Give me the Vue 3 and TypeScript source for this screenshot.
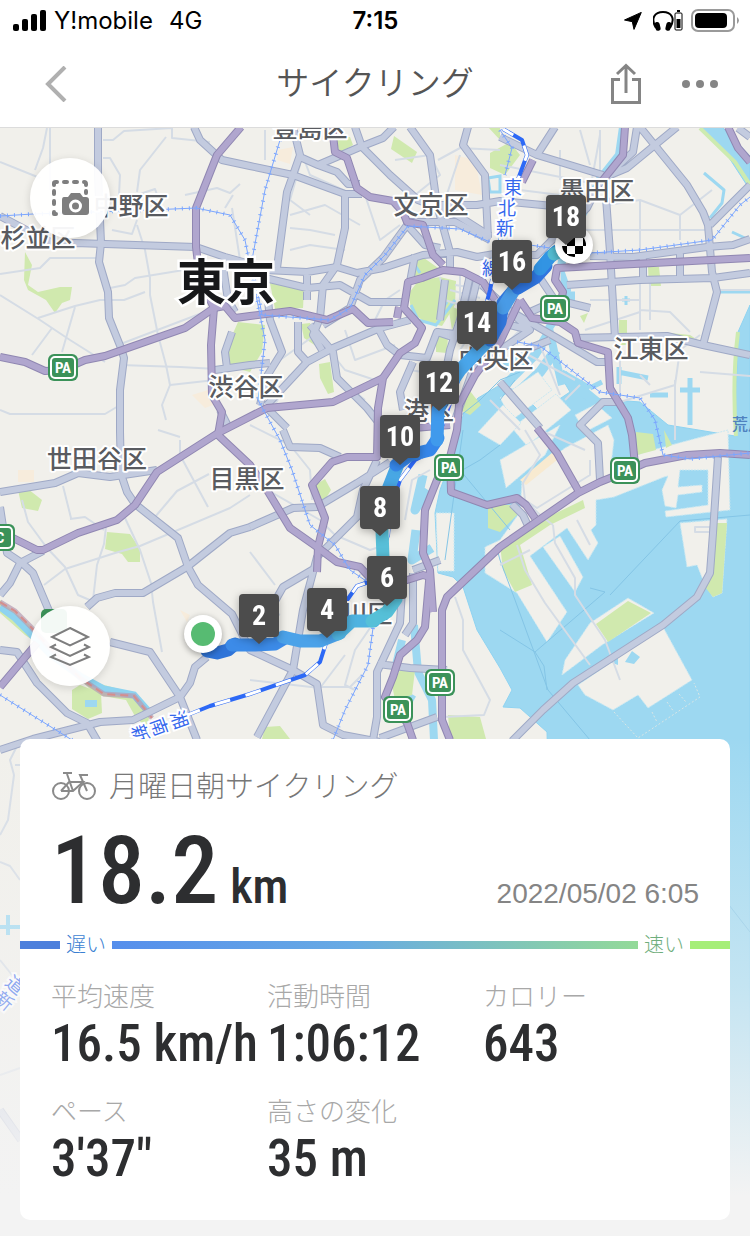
<script setup lang="ts">
interface Pin { km: number; x: number; y: number }
interface Label { text: string; x: number; y: number }
interface Segment { d: string; color: string }

const water: string[] = [
  'M453 455L458 435L464 412L478 398L500 385L520 392L540 412L570 392L560 375L590 398L640 402L668 425L735 436L736 400L738 332L750 305V1236H560L547 732L520 708L503 707L512 690L500 668L477 630L463 587L453 577L438 573L435 513L440 490Z',
  'M700 127L724 150L750 190V156L722 127Z',
]
const canals: { d: string; w: number }[] = [
  { d: 'M623 127L619 155L600 179L587 206L566 244L560 270L567 290L564 305L549 328L556 360L562 385', w: 8 },
  { d: 'M568 296H575M549 332L535 355L500 390L470 425', w: 9 },
  { d: 'M556 350L540 372L510 400M563 375L600 405L590 425M530 352L505 368', w: 10 },
  { d: 'M562 372L590 388M618 372L648 378M619 367V384M590 388L602 382M690 378V425M680 390H700M650 395H668M562 400L535 425', w: 5 },
  { d: 'M704 173L724 190L722 203L710 218M622 300H630M626 296V305M732 232L745 238M720 292H750', w: 3 },
  { d: 'M423 475L415 510L428 490M416 530L412 560L432 548', w: 9 },
  { d: 'M402 640L396 665M414 625L418 672L432 700L434 740M400 692L414 700', w: 8 },
  { d: 'M483 315L476 345M0 927H20M8 915V935', w: 4 },
]
const islands: string[] = [
  'M522 480L565 448L608 425L614 440L611 465L645 452L690 440L728 430L730 510L666 517L665 511L708 505L708 470L680 470L678 487L702 485V492L678 495L676 508L665 506L662 490L668 476L664 477L614 497L596 500L596 525L591 530L598 543L588 560L567 528L530 556L567 612L547 642L517 593L485 573V547L500 540L520 512Z',
  'M543 547L560 536L583 577L575 592Z',
  'M562 675L565 660L590 623L628 598L654 613L602 645Z',
  'M578 685L663 627L692 680L648 708L638 695L613 710L585 695Z',
  'M680 523L727 519L722 593L713 597L703 580L697 565L687 567Z',
  'M436 513H454V571H438Z',
  'M500 398L538 372L552 390L512 420Z',
  'M512 428L556 394L571 410L527 446Z',
  'M478 432L503 405L521 423L500 445Z',
  'M575 415L596 404L612 418L585 432Z',
  'M500 460L560 425L545 455L506 488Z',
]
const parks: string[] = [
  'M25 252L32 265L28 285L38 292L60 287L72 287L70 300L62 303L55 313L46 300L28 290L24 280Z',
  'M409 293L418 281L440 277L456 281L455 305L442 326L425 322L411 312Z',
  'M413 262L424 258L441 270L420 276L413 280Z',
  'M270 283L304 290L303 308L275 309Z',
  'M394 136L417 152L412 163L391 149Z',
  'M335 137H350L353 145L340 153Z',
  'M228 345L238 322L265 325L262 352L250 372L230 367Z',
  'M301 324L310 323L322 350L304 338Z',
  'M319 364L330 362L334 392L328 394L320 378Z',
  'M490 153L510 142L520 155L505 175L490 168ZM488 127H500V140Z',
  'M436 336H448L447 353L436 352ZM448 305L460 310L452 330Z',
  'M648 267H659L661 286H649ZM619 320H627V345H619ZM580 316L588 313L584 323Z',
  'M660 332L690 335L705 345L680 340Z',
  'M18 490L28 489L42 500L38 511L22 508Z',
  'M107 532L130 534L140 549V562H128L122 554L105 549Z',
  'M315 485L325 479L331 490L325 500L318 498Z',
  'M72 690L80 685L101 693L102 713L88 719L72 709Z',
  'M717 523H727L722 593L713 597L705 587Z',
  'M596 624L628 601L651 613L608 642Z',
  'M500 545L530 525L548 517L583 500L585 508L550 525L520 545L532 585L515 592L503 570Z',
  'M636 432L653 434L656 450L637 455ZM664 430L672 445L666 448Z',
  'M488 505L515 505L520 512L500 532L488 528Z',
  'M265 727L280 726L290 739H262ZM448 715L480 717L486 739H450Z',
  'M0 600L30 625L50 650L78 676L104 685L134 693L150 713L147 727L136 718L126 700L96 695L55 655L25 635L0 613Z',
  'M392 685L400 670L415 670L412 695L395 700Z',
  'M463 395L470 391L481 405L470 415L460 410Z',
]
const sand: string[] = [
  'M278 150L293 147L290 164L277 160Z', 'M455 155L475 160L482 195L455 190Z', 'M192 395L208 390L213 405L205 408Z',
  'M513 476L552 446L558 454L520 486Z', 'M18 470H34V482H18Z', 'M448 722L475 718L486 739H460Z', 'M180 610L190 615L187 622Z',
]
const minor: string[] = [
  'M0 162L40 178M47 128L43 148L35 170M103 140H113L124 131L172 128M103 158H110L120 175L119 195M166 137L140 170L137 192M137 220L132 234L112 230M137 195L155 189L160 203M172 128V138L210 142M185 195L217 188L230 193L240 184M137 225L145 250L150 278L150 295L158 335L166 365L170 385L162 405L166 420',
  'M0 274L40 268L50 258L100 258M110 288L125 285L135 278L196 268M38 318L75 306L100 300L124 300L145 292M75 307L62 352M0 295L40 320L70 340L105 362M52 328L32 355M120 365L180 367L217 369M170 385L215 380M0 410L10 414L105 414L120 405M118 345L210 310',
  'M232 208L240 260M233 195L225 208M50 128V190M22 500L28 522L47 548L65 567L78 595L92 601M106 527L104 544L97 565L93 600M44 585L65 569L115 553L140 546L230 508L250 495M125 518L140 550L151 583L153 602L162 652M70 519L85 517L104 530M63 486L71 518M155 517L177 491L209 474M180 440V455L208 507M158 430L180 437',
  'M250 425L290 445L310 470L312 500M250 480L320 520L335 535L370 550L385 545M250 600L280 615M250 552L275 585M320 600L340 615M370 628L355 650L345 685L355 690M320 687H350L362 675M250 680L320 688L345 655',
  'M265 130V160M295 135L310 175L350 193M300 165L290 200L310 215M290 228L310 230L335 235M290 250L310 245L345 250M290 215L325 205L360 225M365 195L380 240L400 225M395 160L430 155L440 175L415 195M438 160L460 148L500 150M460 155L445 200M400 290L385 300L375 320M325 345L345 370L375 380M315 335L280 360M345 330L355 360L395 345M290 375L275 405M340 380L365 400',
  'M440 277L445 300L475 310M460 275V300M470 278V315M450 290L480 298M455 285L490 290M480 320L460 350M430 360L445 390M410 370L440 375',
  'M580 130L590 165M600 130V170M560 150L560 180M500 165L600 185M520 190L560 195M560 205L570 235M607 230H712M640 200V250M607 205L640 200L680 215L712 190M560 230H610M680 215V240M640 282V330M590 300H640M620 345V395M585 330L640 312M640 310L670 312L690 332M650 320V280M715 290H750M560 265V300M600 135L590 190',
  'M620 402L675 385L680 350L700 335M650 385L640 375M675 380V440M700 372L750 376M565 400L580 385M540 345L560 395M520 330L480 370M510 345L575 380M490 400L520 430M500 300L540 330M490 290L530 320M510 290L500 340',
  'M525 430L540 455L523 483L525 500L537 508L590 475V460M525 500L540 515L553 525M517 545L525 570L545 603L590 665M500 565L530 550M553 525L555 543L575 578V595L605 640L620 680M577 520L590 545M540 430L585 450M695 527H710V532H695ZM455 597L463 620L463 650L490 700L484 715L443 717M405 520L412 480L430 470',
  'M20 740L10 760L14 775L8 820L0 835M0 862L10 866L20 880M15 765H21M0 960L12 975M0 1075L20 1068M0 1110L21 1140',
]
const ferry: string[] = [
  'M496 545L500 560L515 600L548 690L590 740M610 595L680 521L750 515M590 588L605 592L535 652L500 630M535 652L544 666L547 690M445 480L480 460L500 445M460 470L510 530M463 430L445 560M455 420L480 400L500 380L520 372M500 400L515 380M729 905L750 932',
]
const gray: string[] = [
  'M98 127V175L101 243L99 262L108 292L109 318L121 348L124 358L120 390V432L121 474L127 492L135 504L178 538L188 567L198 585L232 614L250 650L293 670L317 684L323 725L343 735L380 742',
  'M0 216L30 232L55 244L75 243L196 247L225 257L250 264M194 127L200 140L222 160L250 166L293 175L345 194H362M293 127L300 155L287 192L277 268M300 157L318 165L337 172L348 184H360M318 165L360 147L383 138L394 127M355 127L362 147L390 175L418 200L457 215L490 236M345 195V228L337 265L323 285L320 318',
  'M265 270L307 272L337 267L357 273L383 268L423 255L457 252L477 257L500 253M265 278L307 288L340 285L370 302H403M307 272V300M407 225L383 258L360 280L350 308L323 325M410 127L430 155L437 205L450 252V268M468 127L463 145L485 175L488 238M427 205H477L500 201L553 206M407 222L455 222L490 240M408 226L425 245L440 248',
  'M268 300L270 320L282 352L267 376L260 405M298 322V352L307 362L267 405M310 325L333 352L337 378L367 408L378 422M307 362L333 348L380 328L410 320M378 328L387 345L400 355L427 358L437 332L455 338M413 362L400 392L403 410M215 370L250 365L270 363M232 332L225 352L227 368M222 260L228 300L235 312M220 410L230 430M267 408L287 428M410 282L415 255M320 318L313 335L322 350',
  'M437 332L465 335M470 275L460 320L450 350L440 400M445 280L440 320M477 280L465 330M480 350L455 420',
  'M283 430L290 447L320 448L340 457M250 527L293 508L317 507L357 483L390 462M377 460L363 490L357 517L317 557L303 610L293 670L257 737M317 567L283 587L270 610M402 590L400 623L377 672V717L373 740M413 573V623L405 635M378 664L410 668L447 670M380 738L437 717M413 570L440 560',
  'M0 492L55 483L78 473L110 477L157 470M0 595L10 583L20 563L43 551M0 507L7 553L22 563L33 573L52 618M0 650L17 652L37 683L67 713L87 723L98 742M0 750L33 739L100 722L133 720L180 697L190 683L195 667L207 657M87 607L97 598L115 593H143L187 567L230 533L250 527M110 642L150 652L180 697L197 740',
  'M500 137L537 155L603 175M537 155L555 127M637 127L633 152L600 182L587 208L550 242L537 255H515M677 127L627 168L603 178M640 127L687 185L703 212L708 225L712 272L717 292L703 345M606 198L610 252L615 338M710 225L750 185M590 256L633 257L707 247L733 245L750 239M567 285L640 280L713 278L750 273M643 256V280M680 250V278',
  'M573 338L667 336L703 345L750 355M517 315L557 338L597 362H610M530 312L557 300L590 308M500 382L540 428M617 402H603L580 425L598 443L600 480M525 350L550 340M510 325L530 330L500 350M540 278L560 308M482 285L530 330',
  'M718 457L713 533L710 573L697 597L663 625L573 683L543 710L512 741M512 504L523 515L530 530M0 1110L21 1140M738 128L750 137',
]
const purple: string[] = [
  'M241 127L217 155L196 208V247L200 280L214 308L211 345L212 395L222 412L218 435',
  'M0 357L25 362L45 371L62 370L85 360L105 356L185 328L214 308L225 306L235 318L250 316L290 311L327 320L353 309L368 323L393 322M397 318L399 307',
  'M332 127L335 152L347 158L357 188L370 197L393 201L403 212L407 222L423 225L433 255L443 265',
  'M495 300L483 282L463 272L443 270L422 278L408 282L404 308L422 328L415 343L400 353L383 378L378 408L377 457H347L332 462L312 485L325 518L318 547L317 572',
  'M383 378L333 402L267 408L218 433L157 472L135 505L117 520L78 533L43 550H37L13 538M218 435L250 465L267 490L290 528L317 547L337 562L360 567L372 580L407 580L423 575L430 577',
  'M520 300L500 342L475 375L459 405L457 430L450 457L437 480L425 510L423 553L430 570L425 627L417 640L400 655L393 677L385 697L398 709L407 723L413 740',
  'M450 457L451 492L487 505L517 498L526 505L535 518M430 570L433 612',
  'M450 740L442 720V610L447 597L500 547L578 493L600 482L625 472L645 463L687 455L720 453L750 455',
  'M750 258L557 268L555 280L563 292L560 305M520 300L532 318L560 322L575 332L578 343L608 352L610 388L628 418L632 435L635 465',
  'M537 428L557 453L578 490M625 127L623 155L603 180M533 160L522 182M728 127L738 148L750 162M37 643L0 687M390 430L450 425M505 300L520 280',
]
const rail: string[] = [
  'M0 216L33 214L150 210L196 208L230 215L245 240L253 280L265 340L258 400L280 440L292 470L310 525L335 545L350 570L372 585',
  'M280 140L265 190L252 260L262 315L330 320L350 308L365 275L385 255L408 226L460 229L490 242M373 628L368 665L345 710L333 740M0 695L35 717L72 740',
  'M500 130L512 148L505 175M530 245L550 248M590 253L640 250L712 240L740 205L750 197M517 342L540 346L600 392L640 398L655 420L663 455L690 459L750 453',
]
const shinkansen = 'M185 716L210 706L250 694L305 675L320 662L327 640L345 603L357 586L372 581L388 535L390 510L400 480L415 460L435 450L444 420L462 370L478 335L490 290L500 240L517 182L527 155L522 140L503 129'
const speedRoute: Segment[] = [
  { d: 'M207 651L217 653L228 650L235 644', color: '#2f74d8' },
  { d: 'M232 645L255 645L275 644L285 638', color: '#3c8be8' },
  { d: 'M283 637L300 641L320 641L340 633', color: '#4ba2e9' },
  { d: 'M338 634L352 621L374 621', color: '#4fb3e0' },
  { d: 'M372 621L387 612L396 599V580L383 558', color: '#56c0d8' },
  { d: 'M383 558L382 530L381 515', color: '#58bfd8' },
  { d: 'M381 515L387 492L398 464', color: '#48a7e4' },
  { d: 'M396 465L410 455L430 450L438 438', color: '#3687ea' },
  { d: 'M437 440L438 410L445 393', color: '#409aec' },
  { d: 'M443 395L460 370L479 350L492 337', color: '#4aa6ea' },
  { d: 'M490 340L500 322L503 303L514 290', color: '#3277dc' },
  { d: 'M503 308L514 290L522 285', color: '#499be6' },
  { d: 'M518 288L535 278L546 266', color: '#2f75df' },
  { d: 'M540 269L550 257L557 251', color: '#3294e3' },
  { d: 'M554 254L570 247', color: '#52bbd0' },
]
const pins: Pin[] = [
  { km: 2, x: 239, y: 594 }, { km: 4, x: 307, y: 588 }, { km: 6, x: 367, y: 556 },
  { km: 8, x: 360, y: 486 }, { km: 10, x: 380, y: 415 }, { km: 12, x: 419, y: 361 },
  { km: 14, x: 457, y: 301 }, { km: 16, x: 492, y: 240 }, { km: 18, x: 546, y: 195 },
]
const wards: Label[] = [
  { text: '豊島区', x: 310, y: 137 }, { text: '中野区', x: 131, y: 215 }, { text: '杉並区', x: 38, y: 247 },
  { text: '文京区', x: 431, y: 214 }, { text: '墨田区', x: 597, y: 200 }, { text: '江東区', x: 651, y: 358 },
  { text: '渋谷区', x: 246, y: 396 }, { text: '中央区', x: 496, y: 368 }, { text: '世田谷区', x: 97, y: 468 },
  { text: '目黒区', x: 247, y: 488 }, { text: '港区', x: 429, y: 420 }, { text: '品川区', x: 355, y: 623 },
]
const parking: Label[] = [
  { text: 'PA', x: 63, y: 367 }, { text: 'PA', x: 555, y: 308 }, { text: 'PA', x: 449, y: 467 },
  { text: 'PA', x: 625, y: 470 }, { text: 'PA', x: 440, y: 682 }, { text: 'PA', x: 398, y: 709 },
  { text: 'C', x: 0, y: 537 },
]
const checks = Array.from({ length: 16 }, (_, i) => ({ x: i % 4, y: Math.floor(i / 4) })).filter(c => (c.x + c.y) % 2 === 0)
const stats = [
  { label: '平均速度', value: '16.5 km/h' },
  { label: '活動時間', value: '1:06:12' },
  { label: 'カロリー', value: '643' },
  { label: 'ペース', value: '3\'37"' },
  { label: '高さの変化', value: '35 m' },
]
</script>

<template>
  <div class="screen">
    <div class="status">
      <div class="carrier">
        <svg width="34" height="22" viewBox="0 0 34 22" aria-hidden="true">
          <rect x="1" y="14" width="6" height="7" rx="2" /><rect x="10" y="9" width="6" height="12" rx="2" />
          <rect x="19" y="4" width="6" height="17" rx="2" /><rect x="28" y="0" width="6" height="21" rx="2" />
        </svg>
        <span>Y!mobile</span><span class="network">4G</span>
      </div>
      <time class="clock">7:15</time>
      <div class="indicators">
        <svg width="18" height="18" viewBox="0 0 18 18" aria-hidden="true"><path d="M17.300 .4L10 17.400L8.300 9.700L.5 8Z" stroke="#000" stroke-linejoin="round" /></svg>
        <svg width="30" height="22" viewBox="0 0 30 22" aria-hidden="true">
          <path d="M3 18C-3 8 2 2 10 2S23 8 17 18" fill="none" stroke="#000" stroke-width="2" />
          <rect x="2" y="12" width="5" height="9" rx="2.500" transform="rotate(-14 4 16)" /><rect x="13" y="12" width="5" height="9" rx="2.500" transform="rotate(14 16 16)" />
          <rect x="22" y="3" width="7" height="17" rx="1" fill="none" stroke="#000" /><rect x="24" y="0" width="3" height="2" /><rect x="23.500" y="9" width="4" height="9" />
        </svg>
        <svg width="48" height="24" viewBox="0 0 48 24" aria-hidden="true">
          <rect x="1" y="1" width="42" height="21" rx="6" fill="none" stroke="#9a9a9a" stroke-width="2" />
          <rect x="4" y="4" width="32" height="15" rx="4" /><path d="M46 8Q50 11.500 46 15Z" fill="#9a9a9a" />
        </svg>
      </div>
    </div>

    <header class="bar">
      <button class="icon-button back" type="button" aria-label="戻る">
        <svg width="22" height="36" viewBox="0 0 22 36"><path d="M20 1L3 18L20 35" fill="none" stroke="#b0b0b0" stroke-width="4" /></svg>
      </button>
      <h1>サイクリング</h1>
      <div class="actions">
        <button class="icon-button" type="button" aria-label="共有">
          <svg width="32" height="42" viewBox="0 0 32 42" fill="none" stroke="#858585" stroke-width="3">
            <path d="M10 16.500H2.500V39.500H29.500V16.500H22M16 30V3M7 11L16 2.500L25 11" />
          </svg>
        </button>
        <button class="icon-button" type="button" aria-label="その他">
          <svg width="38" height="10" viewBox="0 0 38 10" fill="#858585"><circle cx="5" cy="5" r="4" /><circle cx="19" cy="5" r="4" /><circle cx="33" cy="5" r="4" /></svg>
        </button>
      </div>
    </header>

    <main class="stage">
      <svg class="map" viewBox="0 128 750 1108" preserveAspectRatio="xMidYMin slice" role="img" aria-label="東京のサイクリングルート">
        <rect y="100" width="750" height="1200" fill="#f1f0eb" />
        <g fill="#f7ecdc"><path v-for="d in sand" :key="d" :d="d" /></g>
        <g fill="#9dd8f1" stroke="#8fd3f1"><path v-for="d in water" :key="d" :d="d" /></g>
        <g fill="none" stroke="#9dd8f1" stroke-linejoin="round"><path v-for="c in canals" :key="c.d" :d="c.d" :stroke-width="c.w" /></g>
        <g fill="#f1f0eb" stroke="#c9e8f2" stroke-dasharray="2 1"><path v-for="d in islands" :key="d" :d="d" /></g>
        <g fill="#d0e9ae"><path v-for="d in parks" :key="d" :d="d" /></g>
        <path d="M520 480L553 452L557 460L526 485Z" fill="#f8ead0" />
        <path d="M738 332Q732 380 736 436M700 128L735 162L750 185" fill="none" stroke="#cdebb0" stroke-width="4" />
        <path d="M413 262L420 273M411 305L418 320L436 325L455 300M447 302L438 315M488 178L500 176V192H490Z" fill="none" stroke="#9dd8f1" stroke-width="3" />
        <path d="M85 700H97V707H85Z" fill="#9dd8f1" />
        <path d="M0 607L15 618L30 633L50 654L80 676L104 689L134 695L150 713" fill="none" stroke="#8ed3f0" stroke-width="7" />
        <path d="M0 602L15 611L30 626L50 648L80 678L104 694L134 696L152 718" fill="none" stroke="#b59bb2" stroke-opacity=".7" stroke-width="5" />
        <path d="M0 602L15 611L30 626L50 648L80 678L104 694L134 696L152 718" fill="none" stroke="#d58e8e" stroke-width="2" stroke-dasharray="8 5" />
        <path d="M625 662L632 651L640 657L634 664ZM610 662L618 658V665Z" fill="#9dd8f1" />
        <path d="M614 712L638 738L700 697L694 683M652 712L657 722M667 702L674 712M679 694L686 702" fill="none" stroke="#d9e6e6" stroke-dasharray="2 2" />
        <g class="line" stroke="#84c5e6"><path v-for="d in ferry" :key="d" :d="d" /></g>
        <g class="line" stroke="#d5dce5" stroke-width="2"><path v-for="d in minor" :key="d" :d="d" /></g>
        <g class="line" stroke="#9fa9c6" stroke-width="8"><path v-for="d in gray" :key="d" :d="d" /></g>
        <g class="line" stroke="#c3cbdf" stroke-width="6"><path v-for="d in gray" :key="d" :d="d" /></g>
        <g class="line" stroke="#9087b2" stroke-width="8"><path v-for="d in purple" :key="d" :d="d" /></g>
        <g class="line" stroke="#b0a6ce" stroke-width="6"><path v-for="d in purple" :key="d" :d="d" /></g>
        <g class="line" stroke="#7ba6ff"><path v-for="d in rail" :key="d" :d="d" /></g>
        <g class="line" stroke="#7ba6ff" stroke-width="4" stroke-dasharray="1 6"><path v-for="d in rail" :key="d" :d="d" /></g>
        <g class="line">
          <path :d="shinkansen" stroke="#2d69f6" stroke-width="4" />
          <path :d="shinkansen" stroke="#fff" stroke-width="3" stroke-dasharray="16 16" />
        </g>

        <g class="ward"><text v-for="w in wards" :key="w.text" :x="w.x" :y="w.y">{{ w.text }}</text></g>
        <text class="capital" x="226" y="300">東京</text>
        <g class="railname">
          <text x="513" y="194">東</text><text x="507" y="215">北</text><text x="505" y="235">新</text><text x="491" y="275">線</text>
          <text transform="translate(173 722) rotate(70)">湘</text><text transform="translate(153 729) rotate(70)">南</text>
          <text transform="translate(134 736) rotate(70)">新</text>
          <text transform="translate(11 990) rotate(40)">道</text><text transform="translate(0 1006) rotate(40)">新</text>
        </g>
        <text class="river" x="732" y="430">荒川</text>

        <rect x="41" y="609" width="26" height="24" rx="5" fill="#3b9259" />
        <g v-for="p in parking" :key="`${p.x}-${p.y}`" class="parking">
          <rect :x="p.x - 15" :y="p.y - 13" width="30" height="27" rx="6" fill="#3b9259" />
          <rect :x="p.x - 12" :y="p.y - 10" width="24" height="21" rx="4" fill="none" stroke="#fff" stroke-width="2" />
          <text :x="p.x" :y="p.y + 6">{{ p.text }}</text>
        </g>

        <g fill="none" stroke-width="13" stroke-linecap="round" stroke-linejoin="round">
          <path v-for="s in speedRoute" :key="s.d" :d="s.d" :stroke="s.color" />
        </g>

        <g class="raised">
          <circle cx="203" cy="634" r="19" fill="#fff" /><circle cx="574" cy="245" r="19" fill="#fff" />
        </g>
        <circle cx="203" cy="634" r="12" fill="#57bb72" />
        <clipPath id="flag"><circle cx="574" cy="245" r="12" /></clipPath>
        <g clip-path="url(#flag)"><rect v-for="c in checks" :key="`${c.x}${c.y}`" :x="559 + c.x * 8" :y="230 + c.y * 8" width="8" height="8" /></g>

        <g v-for="p in pins" :key="p.km" class="pin">
          <path :transform="`translate(${p.x} ${p.y})`" d="M4 0H36Q40 0 40 4V39Q40 43 36 43H28L20 50L12 43H4Q0 43 0 39V4Q0 0 4 0Z" />
          <text :x="p.x + 20" :y="p.y + 31">{{ p.km }}</text>
        </g>
      </svg>
      <div class="fade"></div>

      <div class="tools">
        <button class="round" type="button" aria-label="地図を撮影">
          <svg width="40" height="40" viewBox="0 0 40 40">
            <path d="M4 36V34M4 26V23M4 16V13M4 7V5Q4 4 6 4H7M14 4H17M24 4H27M34 4Q36 4 36 6V7M36 13V15M4 36H6" fill="none" stroke="#7e7e7e" stroke-width="4" stroke-linecap="round" />
            <path d="M14 19H18L21 15H30L33 19H36Q39 19 39 22V34Q39 37 36 37H15Q12 37 12 34V22Q12 19 14 19Z" fill="#7e7e7e" />
            <circle cx="25.500" cy="28" r="5" fill="none" stroke="#fff" stroke-width="3" />
          </svg>
        </button>
        <button class="round" type="button" aria-label="地図レイヤー">
          <svg width="42" height="42" viewBox="0 0 42 42" fill="none" stroke="#7e7e7e" stroke-width="2">
            <path d="M21 3L39 12L21 20.500L3 12ZM7 19.500L2 22L21 31L40 22L35 19.500M7 29.500L2 32L21 40L40 32L35 29.500" />
          </svg>
        </button>
      </div>

      <section class="card">
        <div class="title">
          <svg width="46" height="32" viewBox="0 0 46 32" fill="none" stroke="#8a8a8a" stroke-width="2">
            <circle cx="10" cy="20" r="8" /><circle cx="36" cy="20" r="8" />
            <path d="M10 20L18 11H32L22 20H10M16 3L22 20M12 2H21M36 20L29 4H37" />
          </svg>
          <h2>月曜日朝サイクリング</h2>
        </div>
        <div class="summary">
          <p class="distance"><strong>18.2</strong><span>km</span></p>
          <time>2022/05/02 6:05</time>
        </div>
        <div class="speed">
          <i class="end slow"></i><span class="slow-text">遅い</span><i class="middle"></i><span class="fast-text">速い</span><i class="end fast"></i>
        </div>
        <dl class="stats">
          <div v-for="s in stats" :key="s.label"><dt>{{ s.label }}</dt><dd>{{ s.value }}</dd></div>
        </dl>
      </section>
    </main>
  </div>
</template>

<style>
body { margin: 0; }
</style>

<style scoped>
* { box-sizing: border-box; }
.screen { --condensed: "Liberation Sans Narrow", "Roboto Condensed", Roboto, sans-serif; display: flex; flex-direction: column; min-height: 100vh; background: #fff; font-family: "Liberation Sans", "Noto Sans CJK JP", sans-serif; }
.status { display: grid; grid-template-columns: 1fr auto 1fr; align-items: center; height: 40px; padding: 2px 11px 0 12px; font: 24px/38px Inter, sans-serif; color: #000; }
.carrier { display: flex; align-items: center; gap: 8px; }
.network { margin-left: 8px; }
.clock { font-weight: 600; }
.indicators { display: flex; align-items: center; justify-content: flex-end; gap: 8px; }
.indicators svg:first-child { margin-right: 3px; }
.bar { display: grid; grid-template-columns: 1fr auto 1fr; align-items: center; height: 88px; padding: 0 31px; border-bottom: 1px solid #dcdcdc; }
.bar h1 { margin: 0; font-size: 33px; line-height: 40px; font-weight: 350; color: #555; }
.icon-button { display: flex; padding: 0; border: 0; background: none; cursor: pointer; }
.back { justify-self: start; margin-left: 14px; }
.actions { display: flex; justify-content: flex-end; align-items: center; gap: 39px; }
.stage { position: relative; flex: 1; display: flex; flex-direction: column; overflow: hidden; }
.map { position: absolute; inset: 0; width: 100%; height: 100%; }
.fade { position: absolute; left: 0; right: 0; bottom: 0; height: 500px; background: linear-gradient(rgba(243, 243, 243, 0), rgba(243, 243, 243, .45) 50%, #f3f3f3 92%); }
.line { fill: none; stroke-linejoin: round; stroke-linecap: butt; }
.ward { font: 500 25px "Noto Sans CJK JP", sans-serif; fill: #595b60; text-anchor: middle; paint-order: stroke; stroke: #fff; stroke-width: 4px; stroke-linejoin: round; }
.capital { font: 700 49px "Noto Sans CJK JP", sans-serif; fill: #17181a; text-anchor: middle; paint-order: stroke; stroke: #fff; stroke-width: 5px; }
.railname { font: 18px "Noto Sans CJK JP", sans-serif; fill: #3567ed; text-anchor: middle; paint-order: stroke; stroke: #fff; stroke-width: 4px; }
.river { font: 500 16px "Noto Sans CJK JP", sans-serif; fill: #4f82bf; }
.parking text { font: 700 15px var(--condensed); fill: #fff; text-anchor: middle; }
.raised { filter: drop-shadow(0 2px 3px rgba(0, 0, 0, .35)); }
.pin { filter: drop-shadow(0 2px 4px rgba(0, 0, 0, .3)); }
.pin path { fill: #4c4c4c; }
.pin text { font: 700 28px var(--condensed); fill: #fff; text-anchor: middle; }
.tools { position: relative; flex: 1; min-height: 240px; display: flex; flex-direction: column; justify-content: space-between; align-items: flex-start; padding: 30px 30px 53px; }
.round { display: grid; place-items: center; width: 80px; height: 80px; padding: 0; border: 0; border-radius: 50%; background: rgba(255, 255, 255, .94); box-shadow: 0 2px 8px rgba(0, 0, 0, .14); cursor: pointer; }
.card { position: relative; margin: 0 20px 16px; padding: 30px 0 33px; border-radius: 10px; background: #fff; color: #2d2e30; }
.title { display: flex; align-items: center; gap: 12px; padding: 0 31px; }
.title h2 { margin: 0; font-size: 29px; line-height: 36px; font-weight: 300; color: #777; }
.summary { display: flex; flex-wrap: wrap; align-items: baseline; justify-content: space-between; margin-top: 18px; padding: 0 31px; }
.distance { display: flex; align-items: baseline; gap: 12px; margin: 0; font-family: var(--condensed); font-weight: 500; }
.distance strong { font-size: 94px; line-height: 96px; font-weight: 500; }
.distance span { font-size: 48px; line-height: 48px; }
.summary time { font-size: 28px; line-height: 32px; color: #858585; }
.speed { display: flex; align-items: center; height: 24px; margin-top: 14px; font-size: 20px; line-height: 24px; font-weight: 300; }
.speed i { height: 8px; }
.end { width: 40px; }
.slow { background: #4c7fdc; }
.fast { background: #a5ee78; }
.middle { flex: 1; background: linear-gradient(90deg, #558eec, #67aae4 45%, #93da98); }
.speed span { margin: 0 6px; }
.slow-text { color: #3c7fd2; }
.fast-text { color: #6fae7c; }
.stats { display: grid; grid-template-columns: repeat(3, minmax(0, 1fr)); row-gap: 24px; margin: 24px 0 0; padding: 0 31px; }
.stats dt { font-size: 26px; line-height: 32px; font-weight: 300; color: #a8a8a8; }
.stats dd { margin: 3px 0 0; font: 500 51px/56px var(--condensed); white-space: nowrap; }
</style>
